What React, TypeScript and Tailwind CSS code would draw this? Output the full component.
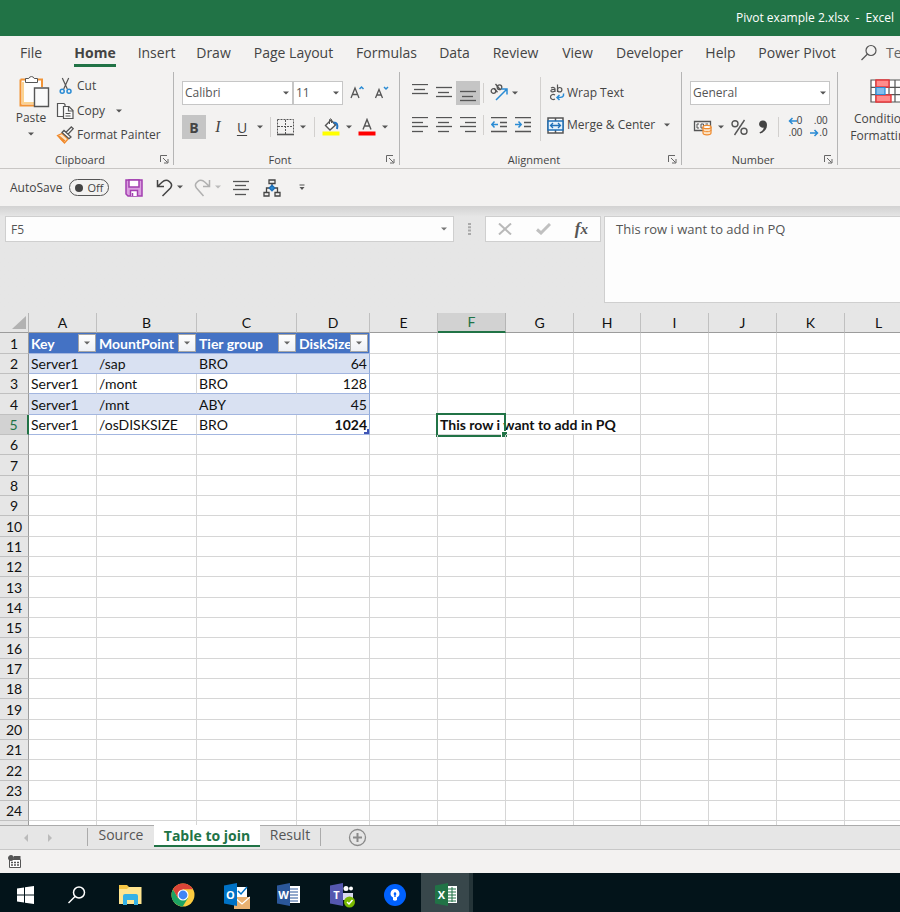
import type { ReactNode } from "react";
import clsx from "clsx";

const tabs = [
  { name: "File", width: "w-[62px]" },
  { name: "Home", width: "w-[66px]" },
  { name: "Insert", width: "w-[57px]" },
  { name: "Draw", width: "w-[57px]" },
  { name: "Page Layout", width: "w-[103px]" },
  { name: "Formulas", width: "w-[83px]" },
  { name: "Data", width: "w-[53px]" },
  { name: "Review", width: "w-[69px]" },
  { name: "View", width: "w-[55px]" },
  { name: "Developer", width: "w-[89px]" },
  { name: "Help", width: "w-[53px]" },
  { name: "Power Pivot", width: "w-[100px]" },
];

// The last column has no width: it takes whatever the window leaves.
const columns = [
  { name: "A", width: "w-[68px]" },
  { name: "B", width: "w-[100px]" },
  { name: "C", width: "w-[100px]" },
  { name: "D", width: "w-[73px]" },
  { name: "E", width: "w-[68px]" },
  { name: "F", width: "w-[68px]" },
  { name: "G", width: "w-[68px]" },
  { name: "H", width: "w-[67px]" },
  { name: "I", width: "w-[68px]" },
  { name: "J", width: "w-[68px]" },
  { name: "K", width: "w-[68px]" },
  { name: "L", width: "" },
];

const data = [
  ["Key", "MountPoint", "Tier group", "DiskSize"],
  ["Server1", "/sap", "BRO", "64"],
  ["Server1", "/mont", "BRO", "128"],
  ["Server1", "/mnt", "ABY", "45"],
  ["Server1", "/osDISKSIZE", "BRO", "1024"],
];

const note = "This row i want to add in PQ";

function Caret({ className = "text-[#555]" }: { className?: string }) {
  return (
    <svg width="6" height="4" viewBox="0 0 6 4" className={clsx("shrink-0", className)}>
      <path d="M0 0.500h6L3 3.500z" fill="currentColor" />
    </svg>
  );
}

function Divider({ className }: { className?: string }) {
  return <div className={clsx("w-px shrink-0", className)} />;
}

function Tool({ label, width = "w-6", active, children }: { label: string; width?: string; active?: boolean; children: ReactNode }) {
  return (
    <button
      aria-label={label}
      className={clsx("flex h-6 shrink-0 items-center justify-center", width, active && "bg-[#c5c5c5]")}
    >
      {children}
    </button>
  );
}

function Group({ name, width, children }: { name: string; width: string; children: ReactNode }) {
  return (
    <section className={clsx("flex h-24 shrink-0", width)}>
      <div className="flex min-w-0 flex-1 flex-col">
        <div className="h-[79px]">{children}</div>
        <div className="flex h-[17px] items-center">
          <span className="flex-1 text-center text-[11px] leading-4">{name}</span>
          <button aria-label={`${name} settings`} className="mr-px flex h-4 w-3 items-center">
            <svg width="9" height="9" viewBox="0 0 9 9" fill="none" stroke="#666">
              <path d="M0.500 7V0.500H7M3 3l4.500 4.500M8 4v4H4" />
            </svg>
          </button>
        </div>
      </div>
      <Divider className="h-[93px] bg-[#b5b5b5]" />
    </section>
  );
}

function Combo({ label, value, width }: { label: string; value: string; width: string }) {
  return (
    <div className={clsx("relative h-6 shrink-0", width)}>
      <select
        aria-label={label}
        defaultValue={value}
        className="block h-6 w-full appearance-none border border-[#c6c6c6] bg-white pl-[2px] text-[12px] leading-5 text-[#555]"
      >
        <option>{value}</option>
      </select>
      <Caret className="pointer-events-none absolute top-[10px] right-1 text-[#555]" />
    </div>
  );
}

// Each entry is [y, x1, x2] of one text line
function Lines({ rows, height = 16 }: { rows: number[][]; height?: number }) {
  return (
    <svg width="16" height={height} viewBox={`0 0 16 ${height}`} stroke="#555" strokeWidth="1.300">
      {rows.map(([y, x1, x2]) => (
        <path key={y} d={`M${x1} ${y + 0.5}H${x2}`} />
      ))}
    </svg>
  );
}

function ClipboardGroup() {
  return (
    <Group name="Clipboard" width="w-[174px]">
      <div className="flex">
        <button className="flex w-[56px] flex-col items-center pt-[3px] pl-[6px] text-[12px] leading-5">
          <svg width="32" height="33" viewBox="0 0 32 33" fill="none" className="ml-[6px]">
            <path d="M3 4.500h20.500V30.500H3z" fill="#fdfdfd" />
            <path d="M2.500 4.500h21.500V12M17 30.500H2.500V4.500" stroke="#f29436" strokeWidth="2" />
            <path d="M5 7v21h12" stroke="#fbd391" strokeWidth="2" />
            <path d="M7.500 7.500v-4h3.200a3 3 0 0 1 5.600 0h3.200v4z" fill="#fff" stroke="#555" />
            <path d="M16.500 13h14v18.500h-14z" fill="#fafafa" stroke="#555" strokeWidth="1.400" />
          </svg>
          <span>Paste</span>
          <span className="flex h-3 items-center">
            <Caret />
          </span>
        </button>
        <div className="flex flex-col pt-[2px] text-[12px]">
          <button className="flex h-6 items-center gap-[3px]">
            <svg width="18" height="18" viewBox="0 0 18 18" fill="none" stroke="#555" strokeWidth="1.200">
              <path d="M6.300 1l5 11M12.700 1l-5 11" />
              <circle cx="6.200" cy="14.300" r="2" stroke="#2a8bd4" strokeWidth="1.500" />
              <circle cx="13" cy="14.300" r="2" stroke="#2a8bd4" strokeWidth="1.500" />
            </svg>
            Cut
          </button>
          <button className="flex h-[25px] items-center gap-[3px]">
            <svg width="18" height="18" viewBox="0 0 18 18" fill="#fafafa" stroke="#555" strokeWidth="1.200">
              <path d="M7 14.500H1.500V1.500H8L9 2.500V4" />
              <path d="M7.500 4.500H13l4 4v8H7.500z" />
              <path d="M12.500 4.500V9H17M9.500 11.500h5M9.500 14h5" fill="none" />
            </svg>
            Copy
            <span className="pl-2">
              <Caret />
            </span>
          </button>
          <button className="flex h-6 items-center gap-[3px]">
            <svg width="18" height="18" viewBox="0 0 18 18" fill="none">
              <path d="M1.500 9.500L6 7.500l6 5.500-3.500 4z" fill="#fce3c4" stroke="#f08a2c" strokeWidth="1.300" />
              <path d="M4 12l4 4M3 10l6 5" stroke="#f08a2c" strokeWidth="1.200" />
              <path d="M6 6.500L8 4.500l7 6.500-2 1.700zM10 6.200L15.300 1l1.900 1.700-5 5.300" fill="#fff" stroke="#555" strokeWidth="1.300" />
            </svg>
            Format Painter
          </button>
        </div>
      </div>
    </Group>
  );
}

function FontGroup() {
  return (
    <Group name="Font" width="w-[226px]">
      <div className="flex flex-col gap-[10px] pt-[9px] pl-2">
        <div className="flex">
          <Combo label="Font" value="Calibri" width="w-[111px]" />
          <Combo label="Font size" value="11" width="w-[50px]" />
          <Tool label="Increase font size" width="w-7">
            <svg width="16" height="16" viewBox="0 0 16 16" fill="none" stroke="#555" strokeWidth="1.300">
              <path d="M2 13L6 3l4 10M3.400 9.500h5.200" />
              <path d="M10.500 4l2-2 2 2" stroke="#2a8bd4" strokeWidth="1.500" />
            </svg>
          </Tool>
          <Tool label="Decrease font size" width="w-5">
            <svg width="16" height="16" viewBox="0 0 16 16" fill="none" stroke="#555" strokeWidth="1.300">
              <path d="M2.500 13L6 4.500 9.500 13M3.700 10h4.600" />
              <path d="M11 2l2 2 2-2" stroke="#2a8bd4" strokeWidth="1.500" />
            </svg>
          </Tool>
        </div>
        <div className="flex items-center">
          <Tool label="Bold" active>
            <b className="text-[14px]">B</b>
          </Tool>
          <Tool label="Italic">
            <i className="font-['Liberation_Serif',serif] text-[16px]">I</i>
          </Tool>
          <Tool label="Underline">
            <span className="text-[14px] underline underline-offset-2">U</span>
          </Tool>
          <Tool label="Underline styles" width="w-3">
            <Caret />
          </Tool>
          <Divider className="mr-1 ml-1 h-5 bg-[#d2d0ce]" />
          <Tool label="Borders" width="w-5">
            <svg width="17" height="17" viewBox="0 0 17 17" fill="none" stroke="#555">
              <path d="M0.500 0.500h16v14M0.500 0.500v14M8.500 1v14M1 7.500h15" strokeDasharray="2 1" />
              <path d="M0 15.500h17" strokeWidth="1.600" />
            </svg>
          </Tool>
          <Tool label="Border styles" width="w-4">
            <Caret />
          </Tool>
          <Divider className="mr-1 ml-[3px] h-5 bg-[#d2d0ce]" />
          <Tool label="Fill color">
            <svg width="18" height="18" viewBox="0 0 18 18" fill="none">
              <path d="M3.500 7.500L9 2l4.500 5L8 12z" fill="#fff" stroke="#555" strokeWidth="1.400" />
              <path d="M7.500 6V1.500q1-1.500 2 0V5" stroke="#555" />
              <path d="M11.500 4.500c3.500 0 4.500 2 3.500 6.500" stroke="#2173c2" strokeWidth="2" />
              <path d="M0.500 13.500h17v4H0.500z" fill="#ff0" />
            </svg>
          </Tool>
          <Tool label="Fill colors" width="w-3">
            <Caret />
          </Tool>
          <Tool label="Font color">
            <svg width="18" height="18" viewBox="0 0 18 18" fill="none">
              <path d="M5 11.500L9 1.500l4 10M6.400 8h5.200" stroke="#555" strokeWidth="1.400" />
              <path d="M0.500 13.500h17v4H0.500z" fill="#f00" />
            </svg>
          </Tool>
          <Tool label="Font colors" width="w-3">
            <Caret />
          </Tool>
        </div>
      </div>
    </Group>
  );
}

function AlignmentGroup() {
  return (
    <Group name="Alignment" width="w-[282px]">
      <div className="flex pt-[5px] pl-2">
        <div className="flex flex-col gap-2 pt-1">
          <div className="flex items-center">
            <Tool label="Top align">
              <Lines rows={[[0, 0, 16], [5, 2, 13], [9, 0, 16]]} height={18} />
            </Tool>
            <Tool label="Middle align">
              <Lines rows={[[3, 0, 16], [8, 2, 13], [12, 0, 16]]} height={18} />
            </Tool>
            <Tool label="Bottom align" active>
              <Lines rows={[[7, 0, 16], [12, 2, 13], [16, 0, 16]]} height={18} />
            </Tool>
            <Divider className="mr-[3px] ml-[3px] h-5 bg-[#d2d0ce]" />
            <Tool label="Orientation">
              <svg width="20" height="20" viewBox="0 0 20 20" fill="none" stroke="#555" strokeWidth="1.300">
                <circle cx="4.500" cy="8" r="2.300" />
                <path d="M5 5.200l3.500 4M6.500 1l5 6" />
                <circle cx="10.500" cy="4.200" r="2.300" />
                <path d="M7 17L17.500 6.500M12.500 6h5.500v5.500" stroke="#2a8bd4" strokeWidth="1.500" />
              </svg>
            </Tool>
            <Tool label="Orientation options" width="w-2">
              <Caret />
            </Tool>
          </div>
          <div className="flex items-center">
            <Tool label="Align left">
              <Lines rows={[[0, 0, 16], [5, 0, 11], [9, 0, 16], [14, 0, 11]]} />
            </Tool>
            <Tool label="Center">
              <Lines rows={[[0, 0, 16], [5, 2, 13], [9, 0, 16], [14, 2, 13]]} />
            </Tool>
            <Tool label="Align right">
              <Lines rows={[[0, 0, 16], [5, 5, 16], [9, 0, 16], [14, 5, 16]]} />
            </Tool>
            <Divider className="mr-[3px] ml-[3px] h-5 bg-[#d2d0ce]" />
            <Tool label="Decrease indent">
              <svg width="16" height="16" viewBox="0 0 16 16" fill="none" stroke="#555" strokeWidth="1.300">
                <path d="M0 0.700h16M9 5.500h7M9 9.500h7M0 14.500h16" />
                <path d="M7 7.500H1M3.500 4.500L0.800 7.500l2.700 3" stroke="#2a8bd4" strokeWidth="1.500" />
              </svg>
            </Tool>
            <Tool label="Increase indent">
              <svg width="16" height="16" viewBox="0 0 16 16" fill="none" stroke="#555" strokeWidth="1.300">
                <path d="M0 0.700h16M9 5.500h7M9 9.500h7M0 14.500h16" />
                <path d="M0 7.500h6M3.500 4.500l2.700 3-2.700 3" stroke="#2a8bd4" strokeWidth="1.500" />
              </svg>
            </Tool>
          </div>
        </div>
        <Divider className="mr-[6px] ml-[5px] h-16 bg-[#d2d0ce]" />
        <div className="flex flex-col gap-2 pt-1 text-[12px]">
          <button className="flex h-6 items-center gap-[2px]">
            <svg width="18" height="18" viewBox="0 0 18 18" fill="none" stroke="#555" strokeWidth="1.200">
              <path d="M4 4c2-1.200 4-.5 4 1v3M8 5.500C5 5 3.500 6 4 7.200s3 1 4-.7" />
              <path d="M10.500 0.500V8" />
              <circle cx="12.700" cy="5.700" r="2.200" />
              <path d="M8 11c-2-1.200-4.500-.3-4.500 2s2.500 3.200 4.500 2" />
              <path d="M16.500 9.500c.7 3.500-1.500 4-6 4M12.500 11L10 13.500l2.500 2.500" stroke="#2a8bd4" strokeWidth="1.500" />
            </svg>
            Wrap Text
          </button>
          <button className="flex h-6 items-center gap-[3px]">
            <svg width="17" height="17" viewBox="0 0 17 17" fill="none">
              <path d="M1 1h15v15H1zM8.500 1v3M8.500 13v3" fill="#fff" stroke="#555" strokeWidth="1.500" />
              <path d="M1 4h15v9H1z" fill="#e6f2fb" stroke="#1f70b8" strokeWidth="1.500" />
              <path d="M3.500 8.500h10M6 6L3.500 8.500 6 11M11 6l2.500 2.500L11 11" stroke="#1f70b8" strokeWidth="1.300" />
            </svg>
            Merge &amp; Center
            <span className="pl-[6px]">
              <Caret />
            </span>
          </button>
        </div>
      </div>
    </Group>
  );
}

function NumberGroup() {
  return (
    <Group name="Number" width="w-[156px]">
      <div className="flex flex-col gap-[10px] pt-[9px] pl-2">
        <Combo label="Number format" value="General" width="w-[140px]" />
        <div className="flex items-center">
          <Tool label="Accounting format" width="w-[25px]">
            <svg width="20" height="18" viewBox="0 0 20 18" fill="none">
              <path d="M1.500 3.500h16v9h-16z" stroke="#555" strokeWidth="1.300" />
              <path d="M6 6H4v4h2M8 6h2.500v4H8zM12.500 6H15" stroke="#555" />
              <path d="M10 9v6c0 1 1.800 1.800 4 1.800s4-.8 4-1.800V9" fill="#fce3c4" stroke="#f08a2c" strokeWidth="1.200" />
              <ellipse cx="14" cy="9" rx="4" ry="1.700" fill="#fff" stroke="#f08a2c" strokeWidth="1.200" />
              <path d="M10 12c0 1 1.800 1.700 4 1.700s4-.7 4-1.700" stroke="#f08a2c" />
            </svg>
          </Tool>
          <Tool label="Accounting formats" width="w-3">
            <Caret />
          </Tool>
          <Tool label="Percent style">
            <svg width="17" height="17" viewBox="0 0 17 17" fill="none" stroke="#555" strokeWidth="1.400">
              <path d="M13.500 1L3.500 16" />
              <circle cx="4" cy="4.700" r="3" />
              <circle cx="13" cy="12.300" r="3" />
            </svg>
          </Tool>
          <Tool label="Comma style">
            <svg width="12" height="16" viewBox="0 0 12 16">
              <path d="M6 1.500a3.600 3.600 0 1 0 .8 7C6.300 11 5 12.300 2.500 13.300l.6 1.200C7.500 13 10 10 10 6c0-2.800-1.600-4.500-4-4.500z" fill="#444" />
            </svg>
          </Tool>
          <Divider className="mr-1 ml-[3px] h-5 bg-[#d2d0ce]" />
          <Tool label="Increase decimal">
            <span className="flex flex-col items-end font-['Liberation_Sans',sans-serif] text-[10px] leading-3">
              <span className="flex items-center">
                <svg width="9" height="8" viewBox="0 0 9 8" fill="none" stroke="#2a8bd4" strokeWidth="1.500">
                  <path d="M9 4H1.500M4.500 1l-3 3 3 3" />
                </svg>
                0
              </span>
              <span>.00</span>
            </span>
          </Tool>
          <Tool label="Decrease decimal">
            <span className="flex flex-col items-end font-['Liberation_Sans',sans-serif] text-[10px] leading-3">
              <span>.00</span>
              <span className="flex items-center">
                <svg width="9" height="8" viewBox="0 0 9 8" fill="none" stroke="#2a8bd4" strokeWidth="1.500">
                  <path d="M0 4h7.500M4.500 1l3 3-3 3" />
                </svg>
                .0
              </span>
            </span>
          </Tool>
        </div>
      </div>
    </Group>
  );
}

function StylesGroup() {
  return (
    <div className="shrink-0 pt-[7px] pl-3">
      <button className="flex w-[72px] flex-col items-center text-[12px] leading-[17px] whitespace-nowrap">
        <svg width="32" height="24" viewBox="0 0 32 24" fill="#fff" stroke="#555" strokeWidth="1.200">
          <path d="M1 1h30v22H1zM1 8.300h30M1 15.600h30M6 1v22M19 1v22M25 1v22" />
          <path d="M6 1h13v7H6zM6 16h15v7H6z" fill="#ff8c8c" stroke="#e8393c" strokeWidth="1.400" />
          <path d="M6 8.500h9v7H6z" fill="#83bdec" stroke="#2a8bd4" />
        </svg>
        <span className="pt-[7px]">Conditional</span>
        <span className="flex items-center gap-1">
          Formatting
          <Caret />
        </span>
      </button>
    </div>
  );
}

function QuickAccess() {
  return (
    <div className="flex h-[37px] shrink-0 items-center bg-[#f3f2f1] pl-[10px] text-[12px]">
      <label className="flex items-center gap-[7px]">
        AutoSave
        <span className="relative flex h-[17px] w-10 items-center justify-end rounded-full border border-[#555] pr-[5px] text-[11px] leading-none">
          <input type="checkbox" className="absolute inset-0 m-0 h-full w-full appearance-none" />
          <span className="absolute top-1 left-[5px] size-2 rounded-full bg-[#444]" />
          Off
        </span>
      </label>
      <Tool label="Save" width="ml-[13px] w-6">
        <svg width="18" height="18" viewBox="0 0 18 18" fill="none" stroke="#a23fb0" strokeWidth="1.500">
          <path d="M1 1h16v16H3l-2-2z" fill="#dba0e0" />
          <path d="M4 1h10v7H4zM5.500 17v-5.500h7V17" fill="#fff" />
          <path d="M7.500 14v3" />
        </svg>
      </Tool>
      <Tool label="Undo" width="ml-[6px] w-6">
        <svg width="17" height="18" viewBox="0 0 17 18" fill="none" stroke="#444" strokeWidth="1.500">
          <path d="M1.500 1v6.500H8M1.500 7.500L6 3.200c5-4.500 12 .8 8.500 5.800L6.500 17" />
        </svg>
      </Tool>
      <Tool label="Undo list" width="w-2 pb-px">
        <Caret />
      </Tool>
      <Tool label="Redo" width="ml-2 w-5">
        <svg width="17" height="18" viewBox="0 0 17 18" fill="none" stroke="#b0b0b0" strokeWidth="1.500">
          <path d="M15.500 1v6.500H9M15.500 7.500L11 3.200c-5-4.500-12 .8-8.500 5.800L9.500 17" />
        </svg>
      </Tool>
      <Tool label="Redo list" width="w-3 pb-px">
        <Caret className="text-[#bbb]" />
      </Tool>
      <Tool label="Center text" width="ml-[3px] w-7">
        <Lines rows={[[1, 0, 16], [5, 2, 13], [9, 0, 16], [14, 2, 13]]} />
      </Tool>
      <Tool label="Relationships" width="ml-[3px] w-7">
        <svg width="18" height="18" viewBox="0 0 18 18" fill="none" stroke="#444" strokeWidth="1.300">
          <path d="M6 1h6v3.500H6zM1 13.500h5V17H1zM12 13.500h5V17h-5zM9 4.500V7M3.500 13V9H7M14.500 13V9H11" />
          <path d="M9 6.200L11.800 9 9 11.800 6.200 9z" fill="#2a8bd4" stroke="#1f70b8" />
        </svg>
      </Tool>
      <Tool label="Customize toolbar" width="ml-[2px] w-7">
        <svg width="6" height="7" viewBox="0 0 6 7">
          <path d="M0.500 0.500h5v1h-5zM0.500 3h5L3 6z" fill="#555" />
        </svg>
      </Tool>
    </div>
  );
}

function FormulaBar() {
  return (
    <div className="flex shrink-0 items-start bg-gradient-to-b from-[#d2d2d2] to-[#e6e6e6] to-10% pt-[10px] pb-[10px] pl-[5px] text-[13px] text-[#555]">
      <div className="relative w-[449px] shrink-0">
        <input
          aria-label="Name box"
          defaultValue="F5"
          className="block h-[26px] w-full border border-[#cfcfcf] bg-[#fdfdfd] px-[5px] text-[12px]"
        />
        <button aria-label="Names" className="absolute top-0 right-0 flex h-[26px] w-5 items-center justify-center">
          <Caret className="text-[#777]" />
        </button>
      </div>
      <div className="flex h-[26px] w-[31px] shrink-0 items-center justify-center">
        <svg width="3" height="12" viewBox="0 0 3 12" fill="#aaa">
          <path d="M0 0h3v2H0zM0 3.300h3v2H0zM0 6.600h3v2H0zM0 10h3v2H0z" />
        </svg>
      </div>
      <div className="mr-[3px] flex h-[26px] w-[116px] shrink-0 items-center justify-around border border-[#cfcfcf] bg-[#fdfdfd]">
        <button aria-label="Cancel">
          <svg width="14" height="12" viewBox="0 0 14 12" stroke="#b9b9b9" strokeWidth="2">
            <path d="M1 0.500l12 11M13 0.500l-12 11" />
          </svg>
        </button>
        <button aria-label="Enter">
          <svg width="15" height="12" viewBox="0 0 15 12" fill="none" stroke="#c0c0c0" strokeWidth="3">
            <path d="M1 6.500l4 3.500 9-9" />
          </svg>
        </button>
        <button aria-label="Insert function" className="font-['Liberation_Serif',serif] text-[17px] leading-5 italic">
          <b>f</b>
          <span className="text-[15px] font-bold">x</span>
        </button>
      </div>
      <textarea
        aria-label="Formula bar"
        defaultValue={note}
        className="h-[87px] min-w-0 flex-1 resize-none border border-r-0 border-[#cfcfcf] bg-[#fdfdfd] px-[11px] py-[2px] leading-5"
      />
    </div>
  );
}

function Cell({ row, col }: { row: number; col: number }) {
  const inTable = row < data.length && col < 4;
  const isHead = inTable && row === 0;
  const isBanded = inTable && row % 2 === 1;
  const isSelected = row === 4 && col === 5;
  // Text running over from F5 hides the grid lines it crosses
  const isCovered = row === 4 && (col === 5 || col === 6);
  const value = inTable ? data[row][col] : "";

  return (
    <td
      className={clsx(
        "relative h-full border-b p-0 align-middle whitespace-nowrap",
        inTable ? "border-b-[#a3b6e0]" : "border-b-[#d6d6d6]",
        isHead && "bg-[#4472c4] font-bold text-white",
        isBanded && "bg-[#d9e1f2]",
        ((isHead || isBanded) && col < 3) || isCovered ? "" : "border-r",
        inTable && col === 3 ? "border-r-[#8ea9db]" : "border-r-[#d6d6d6]"
      )}
    >
      <div className={clsx("flex items-center pl-[2px] leading-[19px]", inTable && col === 3 && !isHead && "justify-end pr-[2px]")}>
        <span className={clsx(row === 4 && col === 3 && "font-bold")}>{value}</span>
        {isHead && (
          <button
            aria-label={`Filter ${value}`}
            className="absolute top-px right-px flex h-[18px] w-[18px] items-center justify-center border border-[#a6a6a6] bg-gradient-to-b from-white to-[#eef0f5]"
          >
            <Caret className="text-[#666]" />
          </button>
        )}
        {isSelected && (
          <>
            <span className="font-bold">{note}</span>
            <span className="absolute -top-[2px] -left-[2px] h-[24px] w-[70px] border-2 border-[#217346]" />
            <span className="absolute -right-px -bottom-[3px] size-[6px] border-t border-l border-white bg-[#217346]" />
          </>
        )}
        {row === 4 && col === 3 && (
          <svg width="5" height="5" viewBox="0 0 5 5" className="absolute right-0 bottom-0">
            <path d="M3 0h2v5H0V3h3z" fill="#4055b5" />
          </svg>
        )}
      </div>
    </td>
  );
}

function Sheet() {
  return (
    <div className="min-h-0 flex-1 overflow-hidden bg-white">
      <table className="w-full min-w-[913px] table-fixed border-separate border-spacing-0 font-['Lato',sans-serif] text-[14px] text-[#111]">
        <colgroup>
          <col className="w-[29px]" />
          {columns.map((column) => (
            <col key={column.name} className={column.width} />
          ))}
        </colgroup>
        <thead>
          <tr className="h-5 bg-[#e6e6e6]">
            <th aria-label="Select all" className="border-r border-b border-r-[#b5b5b5] border-b-[#9c9c9c] p-0">
              <svg width="14" height="14" viewBox="0 0 14 14" className="ml-3">
                <path d="M14 0v13H0z" fill="#b2b2b2" />
              </svg>
            </th>
            {columns.map((column) => (
              <th
                key={column.name}
                className={clsx(
                  "border-r p-0 leading-[18px] font-normal",
                  column.name === "F"
                    ? "border-b-2 border-r-[#b5b5b5] border-b-[#217346] bg-[#d2d2d2] text-[#217346]"
                    : "border-b border-r-[#c0c0c0] border-b-[#9c9c9c]"
                )}
              >
                {column.name}
              </th>
            ))}
          </tr>
        </thead>
        <tbody>
          {Array.from({ length: 25 }, (_, row) => (
            <tr key={row} className={row % 3 === 0 ? "h-[21px]" : "h-5"}>
              <th
                className={clsx(
                  "border-b border-b-[#c0c0c0] p-0 leading-[19px] font-normal",
                  row === 4 ? "border-r-2 border-r-[#217346] bg-[#d2d2d2] text-[#217346]" : "border-r border-r-[#9c9c9c] bg-[#e6e6e6]"
                )}
              >
                {row + 1}
              </th>
              {columns.map((column, col) => (
                <Cell key={column.name} row={row} col={col} />
              ))}
            </tr>
          ))}
        </tbody>
      </table>
    </div>
  );
}

function SheetTabs() {
  return (
    <div className="flex h-[25px] shrink-0 items-start border-t border-b border-t-[#ababab] border-b-[#c8c8c8] bg-[#e6e6e6] text-[14px] leading-[17px] text-[#555]">
      <button aria-label="Previous sheet" className="ml-6 flex h-[23px] w-[5px] items-center">
        <svg width="4" height="8" viewBox="0 0 4 8">
          <path d="M4 0v8L0 4z" fill="#bbb" />
        </svg>
      </button>
      <button aria-label="Next sheet" className="ml-[19px] flex h-[23px] w-[5px] items-center">
        <svg width="4" height="8" viewBox="0 0 4 8">
          <path d="M0 0v8l4-4z" fill="#bbb" />
        </svg>
      </button>
      <Divider className="mt-[2px] ml-[34px] h-[18px] bg-[#ababab]" />
      <button className="w-[66px] shrink-0">Source</button>
      <button className="-mt-px h-[22px] w-[106px] shrink-0 border-b-2 border-[#217346] bg-white font-bold text-[#217346]">
        Table to join
      </button>
      <button className="w-[60px] shrink-0">Result</button>
      <Divider className="mt-[2px] h-[18px] bg-[#ababab]" />
      <button aria-label="New sheet" className="ml-[27px] flex h-[23px] items-center">
        <svg width="19" height="19" viewBox="0 0 19 19" fill="none" stroke="#8a8a8a">
          <circle cx="9.500" cy="9.500" r="8" strokeWidth="1.300" />
          <path d="M5 9.500h9M9.500 5v9" strokeWidth="2" />
        </svg>
      </button>
    </div>
  );
}

// Shared outline of the Office tiles: a folded cover with one letter
function OfficeTile({ letter, color, children }: { letter: string; color: string; children: ReactNode }) {
  return (
    <svg width="28" height="28" viewBox="0 0 28 28" fill="none">
      {children}
      <path d="M2 4.500L15 2v23L2 22.500z" fill={color} />
      <text x="8.500" y="17.500" textAnchor="middle" fontSize="11" fontWeight="bold" fill="#fff">
        {letter}
      </text>
    </svg>
  );
}

const apps = [
  {
    name: "Search",
    icon: (
      <svg width="20" height="20" viewBox="0 0 20 20" fill="none" stroke="#fff" strokeWidth="1.500">
        <circle cx="12" cy="7.500" r="5.500" />
        <path d="M8 11.500L1.500 18" />
      </svg>
    ),
  },
  {
    name: "File Explorer",
    icon: (
      <svg width="24" height="22" viewBox="0 0 24 22">
        <path d="M1 1h8l2 2h12v17H1z" fill="#f5c645" />
        <path d="M1 5h8l2-2h12.500v17H1z" fill="#ffe590" />
        <path d="M5 21V12q0-2 2-2h11q2 0 2 2v9h-4v-5H9v5z" fill="#35b1e6" />
      </svg>
    ),
  },
  {
    name: "Chrome",
    icon: (
      <svg width="24" height="24" viewBox="0 0 24 24">
        <circle cx="12" cy="12" r="11.500" fill="#fdcc3f" />
        <path d="M2 6.300A11.500 11.500 0 0 0 11.700 23.500L17 15H7z" fill="#1ea362" />
        <path d="M2 6.300A11.500 11.500 0 0 1 22 6.300H12L7 15z" fill="#db4437" />
        <circle cx="12" cy="12" r="5.500" fill="#fff" />
        <circle cx="12" cy="12" r="4.400" fill="#4285f4" />
      </svg>
    ),
  },
  {
    name: "Outlook",
    icon: (
      <OfficeTile letter="O" color="#0072c6">
        <path d="M14 6h11v12H14z" fill="#fff" />
        <path d="M16 10l3 3 6-7" stroke="#0072c6" strokeWidth="1.500" />
        <path d="M12 16h16v12H12z" fill="#e9b171" />
        <path d="M12 16l8 7 8-7" stroke="#fff" strokeWidth="1.300" />
      </OfficeTile>
    ),
  },
  {
    name: "Word",
    icon: (
      <OfficeTile letter="W" color="#2b579a">
        <path d="M14 5h11v17H14z" fill="#fff" />
        <path d="M15 8h8M15 11h8M15 14h8M15 17h8M15 20h8" stroke="#2b579a" />
      </OfficeTile>
    ),
  },
  {
    name: "Teams",
    icon: (
      <OfficeTile letter="T" color="#5558af">
        <circle cx="18" cy="7.500" r="2.500" fill="#fff" />
        <circle cx="23" cy="7.500" r="2" fill="#fff" />
        <path d="M15 12h10v7H15z" fill="#d8d8ee" />
        <circle cx="21.500" cy="21" r="5.500" fill="#7ab800" />
        <path d="M19 21l2 2 3.500-4" stroke="#fff" strokeWidth="1.500" />
      </OfficeTile>
    ),
  },
  {
    name: "Assistant",
    icon: (
      <svg width="24" height="24" viewBox="0 0 24 24">
        <circle cx="12" cy="12" r="11" fill="#0061fe" />
        <path d="M12 6a4.500 4.500 0 0 0-2 8.500V17q2 1.500 4 0v-2.500A4.500 4.500 0 0 0 12 6z" fill="#fff" />
        <path d="M12 9.300a1.500 1.500 0 0 0-.7 2.700v2h1.400v-2a1.500 1.500 0 0 0-.7-2.700z" fill="#0061fe" />
      </svg>
    ),
  },
];

function Taskbar() {
  return (
    <nav className="flex h-[39px] shrink-0 bg-[#03141a]">
      <button aria-label="Start" className="flex w-[50px] items-center justify-center pt-1">
        <svg width="17" height="18" viewBox="0 0 17 18" fill="#fff">
          <path d="M0 2.500L7 1.500V8.500H0zM8 1.300L17 0v8.500H8zM0 9.500h7v7L0 15.500zM8 9.500h9V18l-9-1.300z" />
        </svg>
      </button>
      {apps.map((app) => (
        <button key={app.name} aria-label={app.name} className="flex w-[53px] items-center justify-center pt-1">
          {app.icon}
        </button>
      ))}
      <button aria-label="Excel" className="flex w-12 items-center justify-center bg-[#38474b] pt-1 pl-1">
        <OfficeTile letter="X" color="#217346">
          <path d="M14 5h10v17H14z" fill="#fff" />
          <path d="M15 8h8M15 11h8M15 14h8M15 17h8M15 20h8M19 6v15" stroke="#217346" />
        </OfficeTile>
      </button>
      <div className="w-1 bg-[#243438]" />
    </nav>
  );
}

export default function App() {
  return (
    <div className="flex h-screen flex-col overflow-hidden bg-[#f3f2f1] font-['Open_Sans',sans-serif] text-[#444]">
      <header className="flex h-9 shrink-0 items-center justify-end bg-[#217346] pr-[6px] text-[12px] whitespace-pre text-white">
        Pivot example 2.xlsx  -  Excel
      </header>

      <div className="flex h-9 shrink-0 items-start overflow-hidden">
        {tabs.map((tab) => (
          <button key={tab.name} className={clsx("flex shrink-0 justify-center text-[14px] whitespace-nowrap", tab.width)}>
            <span
              className={clsx(
                "border-b-3 pt-[6px] leading-[22px]",
                tab.name === "Home" ? "border-[#217346] font-bold" : "border-transparent"
              )}
            >
              {tab.name}
            </span>
          </button>
        ))}
        <button className="flex h-[33px] shrink-0 items-center gap-2 pl-[13px] text-[14px] whitespace-nowrap text-[#666]">
          <svg width="18" height="18" viewBox="0 0 18 18" fill="none" stroke="#555" strokeWidth="1.200">
            <circle cx="11" cy="6.500" r="5" />
            <path d="M7.500 10L1.500 16" />
          </svg>
          Tell me
        </button>
      </div>

      <div className="flex h-[97px] shrink-0 overflow-hidden border-b border-[#c8c6c4]">
        <ClipboardGroup />
        <FontGroup />
        <AlignmentGroup />
        <NumberGroup />
        <StylesGroup />
      </div>

      <QuickAccess />
      <FormulaBar />
      <Sheet />
      <SheetTabs />

      <footer className="flex h-[23px] shrink-0 items-center pl-2">
        <button aria-label="Record macro">
          <svg width="13" height="13" viewBox="0 0 13 13" fill="none" stroke="#555">
            <path d="M1.500 4.500h11v8h-11z" fill="#fff" />
            <path d="M6 2.500h6.500" strokeWidth="3" />
            <path d="M3 7.500h8M3 10h8" strokeDasharray="2 1" strokeWidth="1.300" />
            <circle cx="3" cy="3" r="2.500" fill="#555" />
          </svg>
        </button>
      </footer>

      <Taskbar />
    </div>
  );
}
